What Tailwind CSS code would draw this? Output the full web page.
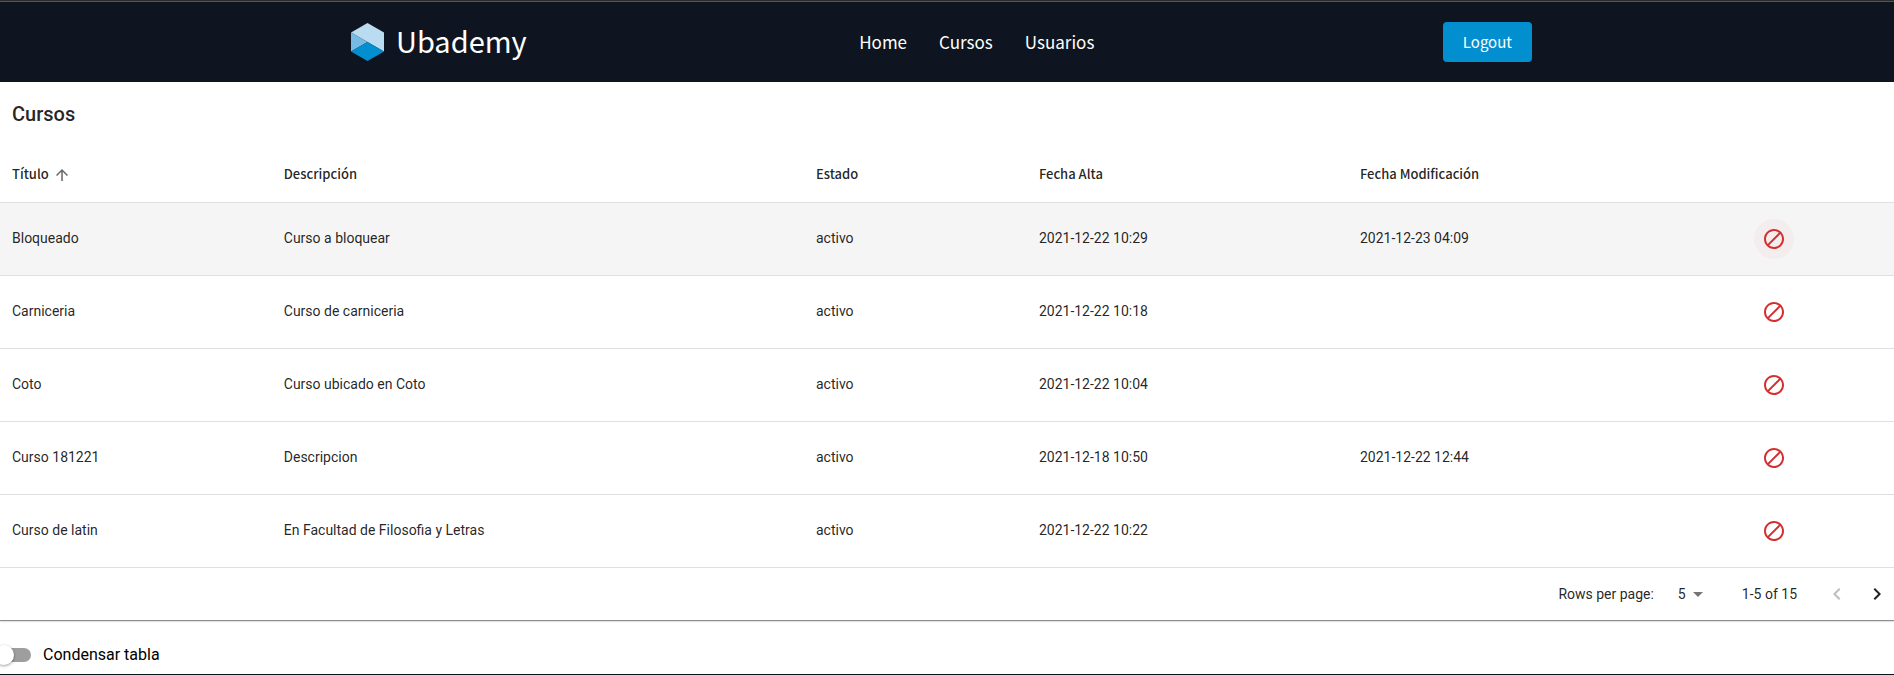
<!DOCTYPE html>
<html lang="es">
<head>
<meta charset="utf-8">
<meta name="viewport" content="width=device-width, initial-scale=1">
<title>Ubademy</title>
<script src="https://cdn.jsdelivr.net/npm/@tailwindcss/browser@4"></script>
</head>
<body class="flex min-h-screen flex-col bg-white font-[Roboto,sans-serif] text-sm text-black/87">
<svg class="hidden" aria-hidden="true">
  <symbol id="block" viewBox="0 0 24 24"><path d="M12 2C6.5 2 2 6.5 2 12s4.5 10 10 10 10-4.5 10-10S17.5 2 12 2zM4 12c0-4.4 3.6-8 8-8 1.8 0 3.5.6 4.9 1.7L5.7 16.9C4.6 15.5 4 13.8 4 12zm8 8c-1.8 0-3.5-.6-4.9-1.7L18.3 7.1C19.4 8.5 20 10.2 20 12c0 4.4-3.6 8-8 8z"/></symbol>
</svg>

<header class="border-t border-[#2b2b2b] bg-[#0f1520] font-['Noto_Sans_CJK_SC',sans-serif] text-white">
  <div class="border-t border-[#555555]">
    <div class="mx-auto flex h-20 max-w-[1200px] items-center justify-between pr-[15px] pl-1">
      <a href="#" class="flex items-center gap-3">
        <svg class="h-[38px] w-[33px]" viewBox="0 0 33 38" aria-hidden="true">
          <path fill="#badcf0" d="M16.500 0 33 9.500v19L16.500 19 0 9.500z"/>
          <path fill="#77bbe4" d="M0 9.500 16.500 19 0 28.500z"/>
          <path fill="#028fcf" d="M16.500 19 33 28.500 16.500 38 0 28.500z"/>
        </svg>
        <span class="pb-1 text-[29px] leading-10">Ubademy</span>
      </a>
      <nav class="mr-4 flex text-[17px]">
        <a href="#" class="px-4">Home</a>
        <a href="#" class="px-4">Cursos</a>
        <a href="#" class="px-4">Usuarios</a>
      </nav>
      <button type="button" class="h-10 rounded bg-[#028fcf] px-5 text-[15px]">Logout</button>
    </div>
  </div>
</header>

<main>
  <section class="shadow-[0_1px_1px_rgba(0,0,0,0.4),0_1px_3px_rgba(0,0,0,0.12)]">
    <h1 class="flex h-16 items-center px-3 text-xl font-medium">Cursos</h1>
    <table class="w-full table-fixed text-left">
      <colgroup>
        <col class="w-[14.35%]"><col class="w-[28.1%]"><col class="w-[11.77%]"><col class="w-[16.95%]"><col class="w-[16.16%]"><col class="w-[12.67%]">
      </colgroup>
      <thead class="font-['Noto_Sans_CJK_SC',sans-serif] text-[13px]">
        <tr class="h-14 border-b border-[#e0e0e0]">
          <th class="px-3 pt-0.5 font-medium">
            <button type="button" class="flex items-center gap-1">Título
              <svg class="size-[18px] fill-black/60" viewBox="0 0 24 24" aria-hidden="true"><path d="M4 12l1.410 1.410L11 7.830V20h2V7.830l5.580 5.590L20 12l-8-8-8 8z"/></svg>
            </button>
          </th>
          <th class="px-3 pt-0.5 font-medium">Descripción</th>
          <th class="px-3 pt-0.5 font-medium">Estado</th>
          <th class="px-3 pt-0.5 font-medium">Fecha Alta</th>
          <th class="px-3 pt-0.5 font-medium">Fecha Modificación</th>
          <th></th>
        </tr>
      </thead>
      <tbody>
        <tr class="h-[73px] border-b border-[#e0e0e0] bg-[#f5f5f5]">
          <td class="px-3 pb-0.5">Bloqueado</td><td class="px-3 pb-0.5">Curso a bloquear</td><td class="px-3 pb-0.5">activo</td><td class="px-3 pb-0.5">2021-12-22 10:29</td><td class="px-3 pb-0.5">2021-12-23 04:09</td>
          <td><button type="button" aria-label="Bloquear Bloqueado" class="mx-auto flex size-10 items-center justify-center rounded-full bg-[#d32f2f]/4"><svg class="size-6 fill-[#d32f2f]"><use href="#block"/></svg></button></td>
        </tr>
        <tr class="h-[73px] border-b border-[#e0e0e0]">
          <td class="px-3 pb-0.5">Carniceria</td><td class="px-3 pb-0.5">Curso de carniceria</td><td class="px-3 pb-0.5">activo</td><td class="px-3 pb-0.5">2021-12-22 10:18</td><td class="px-3 pb-0.5"></td>
          <td><button type="button" aria-label="Bloquear Carniceria" class="mx-auto flex size-10 items-center justify-center rounded-full"><svg class="size-6 fill-[#d32f2f]"><use href="#block"/></svg></button></td>
        </tr>
        <tr class="h-[73px] border-b border-[#e0e0e0]">
          <td class="px-3 pb-0.5">Coto</td><td class="px-3 pb-0.5">Curso ubicado en Coto</td><td class="px-3 pb-0.5">activo</td><td class="px-3 pb-0.5">2021-12-22 10:04</td><td class="px-3 pb-0.5"></td>
          <td><button type="button" aria-label="Bloquear Coto" class="mx-auto flex size-10 items-center justify-center rounded-full"><svg class="size-6 fill-[#d32f2f]"><use href="#block"/></svg></button></td>
        </tr>
        <tr class="h-[73px] border-b border-[#e0e0e0]">
          <td class="px-3 pb-0.5">Curso 181221</td><td class="px-3 pb-0.5">Descripcion</td><td class="px-3 pb-0.5">activo</td><td class="px-3 pb-0.5">2021-12-18 10:50</td><td class="px-3 pb-0.5">2021-12-22 12:44</td>
          <td><button type="button" aria-label="Bloquear Curso 181221" class="mx-auto flex size-10 items-center justify-center rounded-full"><svg class="size-6 fill-[#d32f2f]"><use href="#block"/></svg></button></td>
        </tr>
        <tr class="h-[73px] border-b border-[#e0e0e0]">
          <td class="px-3 pb-0.5">Curso de latin</td><td class="px-3 pb-0.5">En Facultad de Filosofia y Letras</td><td class="px-3 pb-0.5">activo</td><td class="px-3 pb-0.5">2021-12-22 10:22</td><td class="px-3 pb-0.5"></td>
          <td><button type="button" aria-label="Bloquear Curso de latin" class="mx-auto flex size-10 items-center justify-center rounded-full"><svg class="size-6 fill-[#d32f2f]"><use href="#block"/></svg></button></td>
        </tr>
      </tbody>
    </table>
    <div class="flex h-[52px] items-center justify-end pr-px">
      <label for="rows">Rows per page:</label>
      <div class="relative ml-6 flex items-center">
        <select id="rows" class="h-6 w-8 appearance-none bg-transparent"><option>5</option><option>10</option><option>25</option></select>
        <svg class="pointer-events-none absolute right-0 size-6 fill-black/54" viewBox="0 0 24 24" aria-hidden="true"><path d="M7 10l5 5 5-5z"/></svg>
      </div>
      <p class="ml-8">1-5 of 15</p>
      <div class="ml-6 flex gap-2">
        <button type="button" disabled aria-label="Previous page" class="flex size-8 items-center justify-center"><svg class="size-6 fill-black/26" viewBox="0 0 24 24"><path d="M15.410 16.590 10.830 12l4.580-4.590L14 6l-6 6 6 6 1.410-1.410z"/></svg></button>
        <button type="button" aria-label="Next page" class="flex size-8 items-center justify-center"><svg class="size-6 fill-black/87" viewBox="0 0 24 24"><path d="M8.590 16.590 13.170 12 8.590 7.410 10 6l6 6-6 6-1.410-1.410z"/></svg></button>
      </div>
    </div>
  </section>

  <div class="mt-4 flex h-[38px] items-center gap-3 overflow-hidden">
    <input id="dense" type="checkbox" class="relative -ml-[3px] h-3.5 w-[34px] appearance-none rounded-full bg-[#9e9e9e] before:absolute before:-top-[3px] before:-left-[3px] before:size-5 before:rounded-full before:bg-white before:shadow-[0_1px_3px_rgba(0,0,0,0.4)]">
    <label for="dense" class="text-base text-black">Condensar tabla</label>
  </div>
</main>
<footer class="grow bg-[#0f1520]"></footer>
</body>
</html>
